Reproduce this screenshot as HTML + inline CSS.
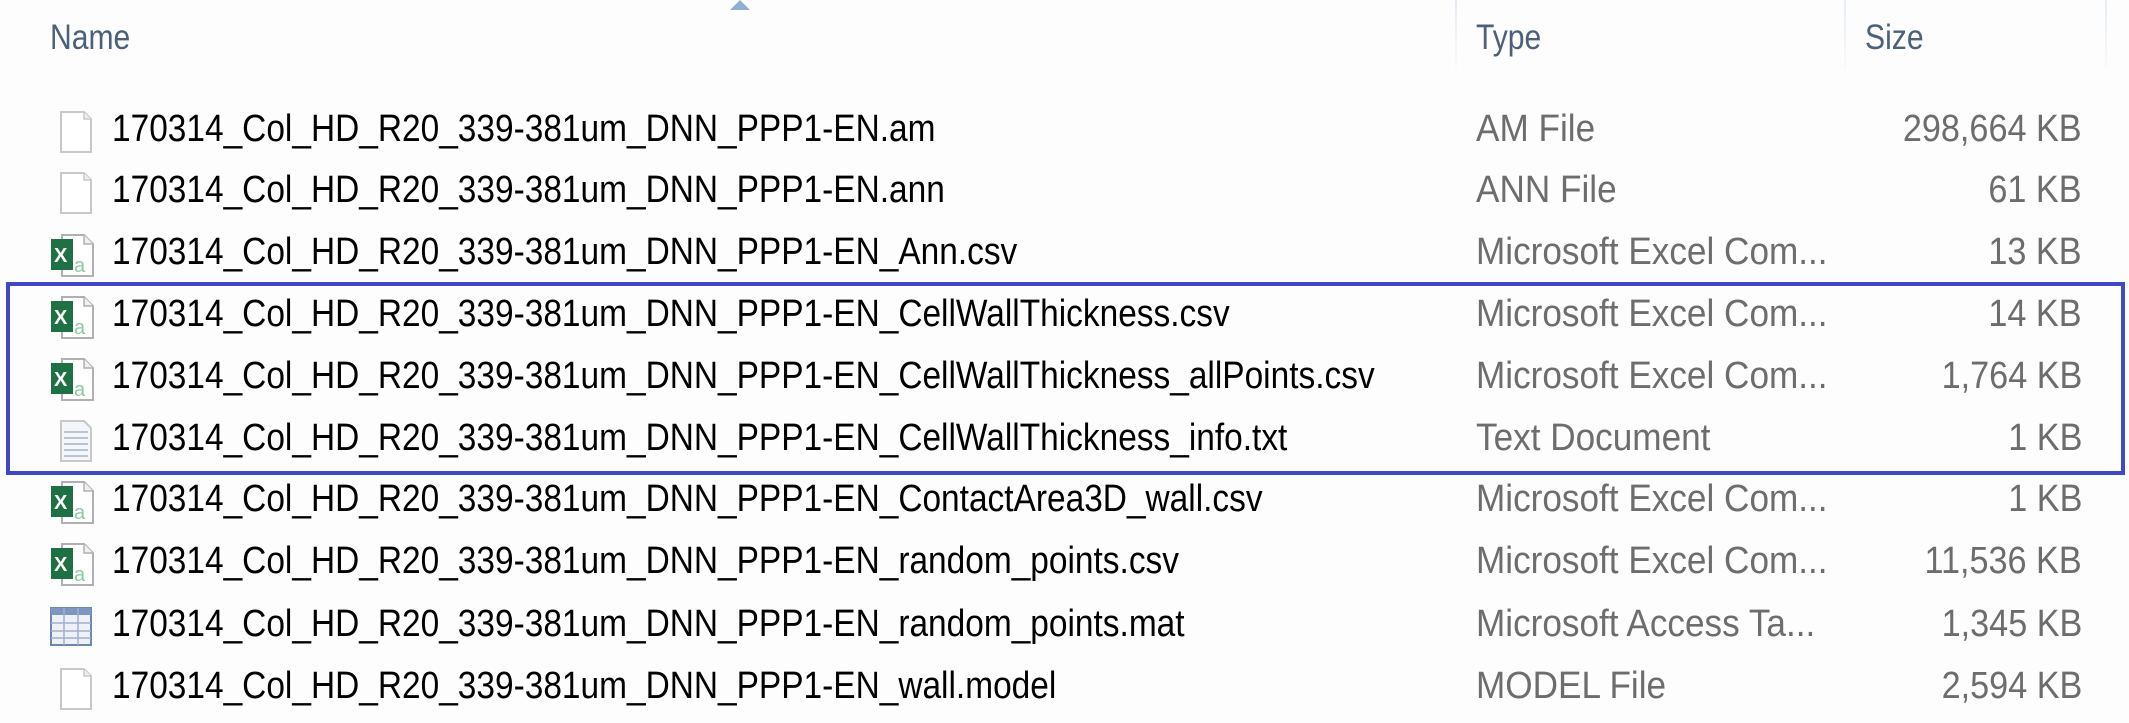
<!DOCTYPE html>
<html><head><meta charset="utf-8"><style>
html,body{margin:0;padding:0;}
body{width:2129px;height:723px;background:#fdfdfd;position:relative;overflow:hidden;font-family:"Liberation Sans",sans-serif;}
.h{position:absolute;top:18px;font-size:35px;color:#4c607a;transform:scaleX(0.86);transform-origin:left;}
.div{position:absolute;top:0;width:2px;height:68px;background:linear-gradient(#e4ecf5,#f8fafc);}
.row{position:absolute;left:0;width:2129px;height:62px;}
.n{position:absolute;left:112px;top:9px;font-size:38px;color:#000;white-space:nowrap;transform:scaleX(0.88);transform-origin:left;}
.t{position:absolute;left:1476px;top:9px;font-size:38px;color:#6d6d6d;white-space:nowrap;transform:scaleX(0.925);transform-origin:left;}
.s{position:absolute;right:47px;top:9px;font-size:38px;color:#6d6d6d;white-space:nowrap;transform:scaleX(0.9);transform-origin:right;}
.ic{position:absolute;left:50px;top:12px;}
.box{position:absolute;left:6px;top:282px;width:2111px;height:185px;border:4px solid #4048c8;}
</style></head><body>
<svg style="position:absolute;left:728px;top:0" width="24" height="10"><path d="M2 10 L12 0 L22 10 Z" fill="#8fb0d2"/></svg>
<div class="h" style="left:50px">Name</div>
<div class="div" style="left:1455px"></div>
<div class="h" style="left:1476px">Type</div>
<div class="div" style="left:1844px"></div>
<div class="h" style="left:1865px">Size</div>
<div class="div" style="left:2105px"></div>

<svg width="0" height="0" style="position:absolute">
<defs>
<g id="blank"><path d="M11 1 H34 L41 8 V41 H11 Z" fill="#fff" stroke="#c8c8c8" stroke-width="2"/><path d="M34 1 V8 H41" fill="#eee" stroke="#c8c8c8" stroke-width="1.5"/></g>
<g id="xls"><path d="M12 1 H34 L43 10 V42 H12 Z" fill="#fff" stroke="#b0b0b0" stroke-width="2"/><path d="M34 1 V10 H43" fill="#f0f0f0" stroke="#b0b0b0" stroke-width="1.5"/><rect x="1" y="5" width="22" height="31" fill="#1e7145"/><text x="4" y="28" font-family="Liberation Sans" font-weight="bold" font-size="20" fill="#fff">X</text><text x="24" y="38" font-family="Liberation Sans" font-size="20" fill="#8fc8a4">a</text></g>
<g id="txt"><path d="M11 1 H34 L41 8 V41 H11 Z" fill="#f4f6f9" stroke="#c8c8c8" stroke-width="2"/><path d="M14 12 H38 M14 18 H38 M14 24 H38 M14 30 H38 M14 36 H38" stroke="#b8c4d2" stroke-width="2"/></g>
<g id="tbl"><rect x="1" y="2" width="40" height="37" fill="#eef2f8" stroke="#6f86b0" stroke-width="2"/><rect x="1" y="2" width="40" height="7" fill="#7f96c0"/><path d="M14 2 V39 M28 2 V39 M1 17 H41 M1 25 H41 M1 32 H41" stroke="#9fb0cc" stroke-width="1.5"/></g>
</defs></svg>

<div class="row" style="top:99px"><svg class="ic" width="46" height="44"><use href="#blank"/></svg><div class="n">170314_Col_HD_R20_339-381um_DNN_PPP1-EN.am</div><div class="t">AM File</div><div class="s">298,664 KB</div></div>
<div class="row" style="top:160px"><svg class="ic" width="46" height="44"><use href="#blank"/></svg><div class="n">170314_Col_HD_R20_339-381um_DNN_PPP1-EN.ann</div><div class="t">ANN File</div><div class="s">61 KB</div></div>
<div class="row" style="top:222px"><svg class="ic" width="46" height="44"><use href="#xls"/></svg><div class="n">170314_Col_HD_R20_339-381um_DNN_PPP1-EN_Ann.csv</div><div class="t">Microsoft Excel Com...</div><div class="s">13 KB</div></div>
<div class="row" style="top:284px"><svg class="ic" width="46" height="44"><use href="#xls"/></svg><div class="n">170314_Col_HD_R20_339-381um_DNN_PPP1-EN_CellWallThickness.csv</div><div class="t">Microsoft Excel Com...</div><div class="s">14 KB</div></div>
<div class="row" style="top:346px"><svg class="ic" width="46" height="44"><use href="#xls"/></svg><div class="n">170314_Col_HD_R20_339-381um_DNN_PPP1-EN_CellWallThickness_allPoints.csv</div><div class="t">Microsoft Excel Com...</div><div class="s">1,764 KB</div></div>
<div class="row" style="top:408px"><svg class="ic" width="46" height="44"><use href="#txt"/></svg><div class="n">170314_Col_HD_R20_339-381um_DNN_PPP1-EN_CellWallThickness_info.txt</div><div class="t">Text Document</div><div class="s">1 KB</div></div>
<div class="row" style="top:469px"><svg class="ic" width="46" height="44"><use href="#xls"/></svg><div class="n">170314_Col_HD_R20_339-381um_DNN_PPP1-EN_ContactArea3D_wall.csv</div><div class="t">Microsoft Excel Com...</div><div class="s">1 KB</div></div>
<div class="row" style="top:531px"><svg class="ic" width="46" height="44"><use href="#xls"/></svg><div class="n">170314_Col_HD_R20_339-381um_DNN_PPP1-EN_random_points.csv</div><div class="t">Microsoft Excel Com...</div><div class="s">11,536 KB</div></div>
<div class="row" style="top:594px"><svg class="ic" width="46" height="44"><use href="#tbl"/></svg><div class="n">170314_Col_HD_R20_339-381um_DNN_PPP1-EN_random_points.mat</div><div class="t">Microsoft Access Ta...</div><div class="s">1,345 KB</div></div>
<div class="row" style="top:656px"><svg class="ic" width="46" height="44"><use href="#blank"/></svg><div class="n">170314_Col_HD_R20_339-381um_DNN_PPP1-EN_wall.model</div><div class="t">MODEL File</div><div class="s">2,594 KB</div></div>

<div class="box"></div>
</body></html>
